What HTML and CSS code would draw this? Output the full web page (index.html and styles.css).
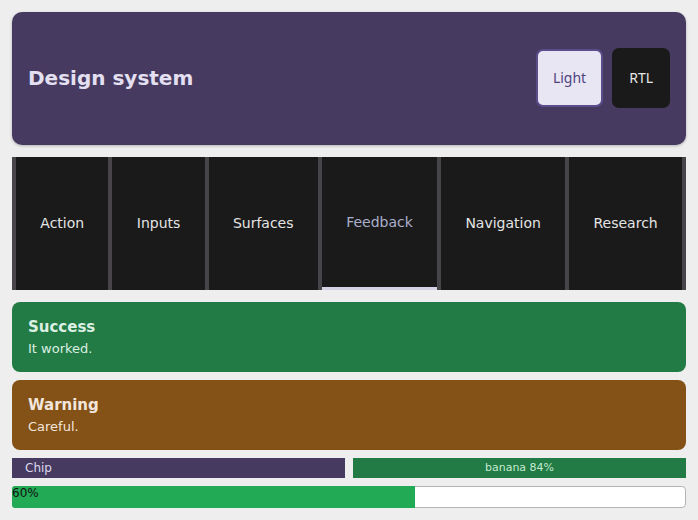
FILE: index.html
```html
<!DOCTYPE html>
<html lang="en">
<head>
    <meta charset="UTF-8">
    <meta name="viewport" content="width=device-width, initial-scale=1.0">
    <title>Design system</title>
    <link rel="stylesheet" href="styles.css">
</head>
<body>
    <div class="page">
        <header class="header">
            <h1>Design system</h1>
            <div class="header-actions">
                <button class="btn-light">Light</button>
                <button class="btn-rtl">RTL</button>
            </div>
        </header>
        <nav class="tabs">
            <div class="tab">Action</div>
            <div class="tab">Inputs</div>
            <div class="tab">Surfaces</div>
            <div class="tab active">Feedback</div>
            <div class="tab">Navigation</div>
            <div class="tab">Research</div>
        </nav>
        <div class="alert alert-success">
            <div class="alert-title">Success</div>
            <div class="alert-text">It worked.</div>
        </div>
        <div class="alert alert-warning">
            <div class="alert-title">Warning</div>
            <div class="alert-text">Careful.</div>
        </div>
        <div class="chips">
            <div class="chip">Chip</div>
            <div class="chip chip-green">banana 84%</div>
        </div>
        <div class="progress">
            <div class="progress-fill" style="width: 60%">60%</div>
        </div>
    </div>
</body>
</html>
```

FILE: styles.css
```css
body {
    font-family: 'DejaVu Sans', sans-serif;
    margin: 0;
    padding: 0;
    background-color: #eeeeee;
    color: #333;
}
.page {
    padding: 12px;
}
.header {
    display: flex;
    align-items: center;
    justify-content: space-between;
    padding: 36px 16px 37px;
    background: #463a60;
    border-radius: 10px;
    box-shadow: 0 1px 3px rgba(0, 0, 0, 0.25);
}
.header h1 {
    margin: 0;
    font-size: 20px;
    font-weight: bold;
    color: #e4e0f2;
}
.header-actions {
    display: flex;
    align-items: center;
    gap: 9px;
}
.header-actions button {
    font-family: 'Noto Sans', sans-serif;
    font-size: 14px;
    line-height: 18px;
    border-radius: 7px;
    cursor: pointer;
}
.btn-light {
    padding: 18px 15px;
    background: #e8e6f2;
    color: #4f4380;
    border: 2px solid #5b4c8c;
}
.btn-rtl {
    padding: 21px 17px;
    background: #1a1a1a;
    color: #e6e6e6;
    border: none;
}
.tabs {
    display: flex;
    gap: 4px;
    margin-top: 12px;
    padding: 0 4px;
    background: #47444a;
}
.tab {
    flex: 1 1 auto;
    padding: 58px 24px;
    background: #1a1a1a;
    color: #e4e4e4;
    font-size: 14px;
    line-height: 17px;
    text-align: center;
}
.tab.active {
    padding-top: 57px;
    padding-bottom: 56px;
    border-bottom: 3px solid #d6d2e6;
    color: #aab0cc;
}
.alert {
    margin-top: 12px;
    padding: 15px 16px 14px;
    border-radius: 8px;
}
.alert + .alert {
    margin-top: 8px;
}
.alert-success {
    background: #227a44;
    color: #dcefe3;
}
.alert-warning {
    background: #845117;
    color: #f2e6dc;
}
.alert-title {
    font-size: 15px;
    font-weight: bold;
    line-height: 20px;
}
.alert-text {
    margin-top: 3px;
    font-size: 13px;
    line-height: 18px;
}
.chips {
    display: grid;
    grid-template-columns: 1fr 1fr;
    gap: 8px;
    margin-top: 8px;
}
.chip {
    height: 20px;
    padding-left: 13px;
    background: #463a60;
    color: #ddd8ee;
    font-size: 12px;
    line-height: 20px;
}
.chip-green {
    padding-left: 0;
    background: #227a44;
    color: #c4ead2;
    font-size: 11px;
    text-align: center;
}
.progress {
    margin-top: 8px;
    height: 20px;
    background: #fff;
    border: 1px solid #b4b4b4;
    border-radius: 4px;
}
.progress-fill {
    height: 22px;
    margin: -1px;
    background: #22aa55;
    color: #111;
    border-radius: 3px 0 0 3px;
    font-size: 12px;
    line-height: 14px;
}
```
